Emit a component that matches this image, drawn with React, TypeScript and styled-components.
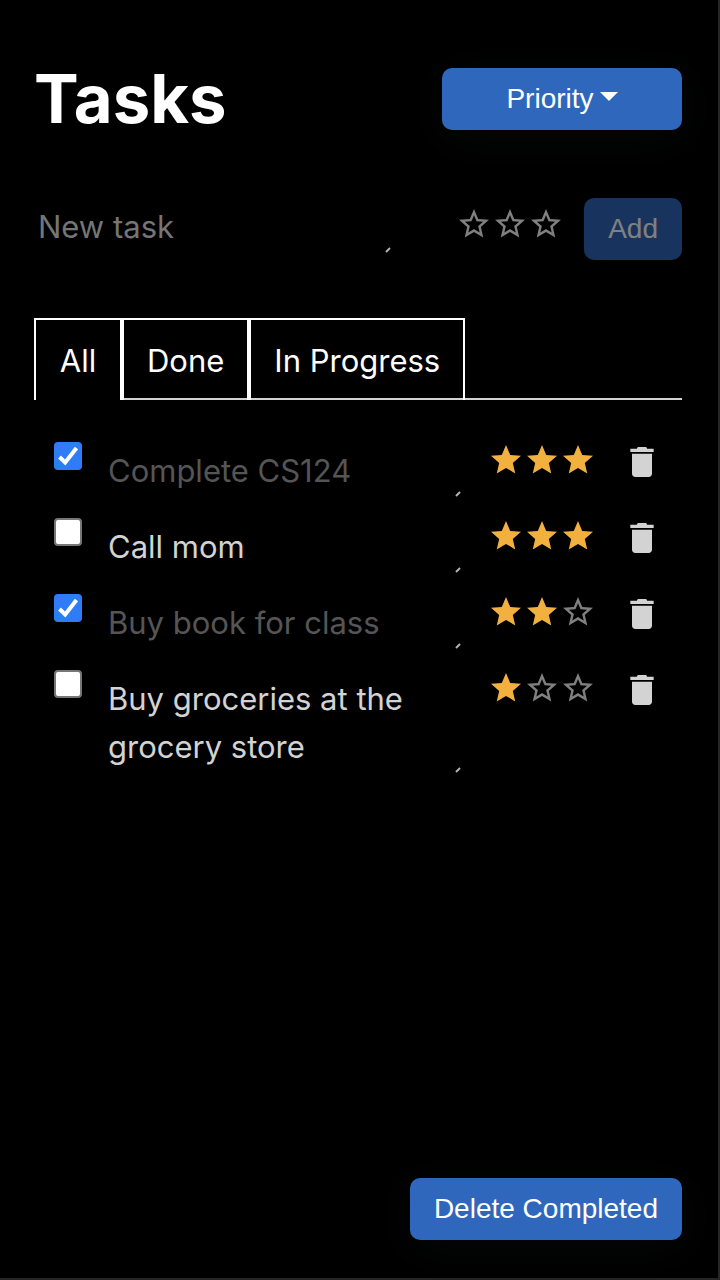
import React, { useState } from "react";
import styled, { createGlobalStyle } from "styled-components";

const GlobalStyle = createGlobalStyle`
  *, *::before, *::after { box-sizing: border-box; }
  body {
    margin: 0;
    background: #000;
    color: #fff;
    font-family: Inter, "Liberation Sans", sans-serif;
    font-size: 31px;
  }
`;

const Page = styled.main`
  display: flex;
  flex-direction: column;
  min-height: 100vh;
  padding: 54px 36px 38px 34px;
  border-right: 2px solid #262626;
  border-bottom: 2px solid #262323;
`;

const Header = styled.header`
  display: flex;
  align-items: center;
  justify-content: space-between;
  height: 90px;
`;

const Title = styled.h1`
  margin: 0;
  font-size: 67px;
  line-height: 90px;
  font-weight: 700;
`;

const Button = styled.button<{ $wide?: boolean }>`
  display: flex;
  flex: none;
  align-items: center;
  justify-content: center;
  gap: 6px;
  height: 62px;
  width: ${(p) => (p.$wide ? "240px" : "auto")};
  padding: 0 24px;
  border: 0;
  border-radius: 10px;
  background: #2f67bc;
  color: #fff;
  font: 28px "Liberation Sans", Arial, sans-serif;
  box-shadow: 0 8px 48px rgba(140, 150, 150, 0.05);
  cursor: pointer;

  &:disabled {
    opacity: 0.5;
    box-shadow: none;
    cursor: default;
  }
`;

const Caret = styled.span`
  margin-bottom: 6px;
  border: 9px solid transparent;
  border-top-color: #fff;
  border-bottom: 0;
`;

const NewTask = styled.form`
  display: flex;
  align-items: flex-start;
  margin-top: 54px;
`;

const NewRating = styled.div`
  margin: 8px 20px 0 64px;
`;

const TextWrap = styled.div`
  position: relative;
  flex: 1;
  min-width: 0;
`;

const TextArea = styled.textarea<{ $faded?: boolean }>`
  display: block;
  width: 100%;
  padding: 5px 4px 4px;
  border: 0;
  outline: 0;
  background: transparent;
  color: ${(p) => (p.$faded ? "#555" : "#d3d3d3")};
  font: inherit;
  line-height: 48px;
  resize: none;
  overflow: hidden;
  field-sizing: content;

  &::placeholder {
    color: #757575;
    opacity: 1;
  }
`;

const Grip = styled.svg`
  position: absolute;
  right: 1px;
  bottom: 2px;
  width: 6px;
  height: 6px;
`;

const Stars = styled.div`
  display: flex;
`;

const IconButton = styled.button`
  display: block;
  padding: 0;
  border: 0;
  background: none;
  cursor: pointer;

  svg { display: block; }
`;

const TabBar = styled.div`
  display: flex;
  margin-top: 58px;
`;

const Tab = styled.button<{ $active: boolean }>`
  height: 82px;
  min-width: 88px;
  padding: 0 23px;
  border: 2px solid #fff;
  border-bottom: 0;
  background: #000;
  box-shadow: ${(p) => (p.$active ? "none" : "inset 0 -2px #d3d3d3")};
  color: #fff;
  font: inherit;
  cursor: pointer;
`;

const TabRule = styled.div`
  flex: 1;
  border-bottom: 2px solid #d3d3d3;
`;

const TaskList = styled.ul`
  display: grid;
  gap: 19px;
  margin: 42px 0 0;
  padding: 0 20px;
  list-style: none;
`;

const TaskRow = styled.li`
  display: flex;
  align-items: flex-start;
`;

const CheckWrap = styled.span`
  display: grid;
  flex: none;
  margin-right: 22px;

  > * { grid-area: 1 / 1; }
  svg { pointer-events: none; }
`;

const Checkbox = styled.input`
  appearance: none;
  width: 28px;
  height: 28px;
  margin: 0;
  border: 2px solid #767676;
  border-radius: 4px;
  background: #fff;

  &:checked {
    border-color: #2e7cf6;
    background: #2e7cf6;
  }
`;

const TaskActions = styled.div`
  display: flex;
  align-items: flex-start;
  gap: 26px;
  margin-left: 26px;
`;

const Footer = styled.footer`
  display: flex;
  justify-content: flex-end;
  margin-top: auto;
`;

const FILLED =
  "M12 17.27L18.18 21l-1.64-7.03L22 9.24l-7.19-.61L12 2 9.19 8.63 2 9.24l5.46 4.73L5.82 21z";
const OUTLINE =
  "M22 9.24l-7.19-.62L12 2 9.19 8.63 2 9.24l5.46 4.73L5.82 21 12 17.27 18.18 21l-1.63-7.03L22 9.24zM12 15.4l-3.76 2.27 1-4.28-3.32-2.88 4.38-.38L12 6.1l1.71 4.04 4.38.38-3.32 2.88 1 4.28L12 15.4z";

function Rating({ value, onChange }: { value: number; onChange: (n: number) => void }) {
  return (
    <Stars role="group" aria-label="Priority">
      {[1, 2, 3].map((n) => (
        <IconButton key={n} type="button" aria-label={`Priority ${n}`} onClick={() => onChange(n)}>
          <svg width="36" height="36" viewBox="0 0 24 24" fill={n <= value ? "#f2b13f" : "#808080"}>
            <path d={n <= value ? FILLED : OUTLINE} />
          </svg>
        </IconButton>
      ))}
    </Stars>
  );
}

function EditableText({
  label,
  value,
  placeholder,
  faded,
  onChange,
}: {
  label: string;
  value: string;
  placeholder?: string;
  faded?: boolean;
  onChange: (text: string) => void;
}) {
  return (
    <TextWrap>
      <TextArea
        rows={1}
        aria-label={label}
        placeholder={placeholder}
        value={value}
        $faded={faded}
        onChange={(e) => onChange(e.target.value)}
      />
      <Grip viewBox="0 0 6 6" aria-hidden="true">
        <path d="M1 5L5 1" stroke="#b4b4b4" strokeWidth="2" />
      </Grip>
    </TextWrap>
  );
}

type Task = { id: number; text: string; done: boolean; stars: number };

const INITIAL: Task[] = [
  { id: 1, text: "Complete CS124", done: true, stars: 3 },
  { id: 2, text: "Call mom", done: false, stars: 3 },
  { id: 3, text: "Buy book for class", done: true, stars: 2 },
  { id: 4, text: "Buy groceries at the grocery store", done: false, stars: 1 },
];

const TABS = ["All", "Done", "In Progress"];

export default function App() {
  const [tasks, setTasks] = useState(INITIAL);
  const [tab, setTab] = useState("All");
  const [draft, setDraft] = useState("");
  const [draftStars, setDraftStars] = useState(0);

  const update = (id: number, change: Partial<Task>) =>
    setTasks(tasks.map((t) => (t.id === id ? { ...t, ...change } : t)));

  const visible = tasks.filter((t) => tab === "All" || t.done === (tab === "Done"));

  const add = (e: React.FormEvent) => {
    e.preventDefault();
    setTasks([...tasks, { id: Date.now(), text: draft, done: false, stars: draftStars }]);
    setDraft("");
    setDraftStars(0);
  };

  return (
    <>
      <GlobalStyle />
      <Page>
        <Header>
          <Title>Tasks</Title>
          <Button type="button" $wide aria-haspopup="menu">
            Priority
            <Caret />
          </Button>
        </Header>

        <NewTask onSubmit={add}>
          <EditableText label="New task" placeholder="New task" value={draft} onChange={setDraft} />
          <NewRating>
            <Rating value={draftStars} onChange={setDraftStars} />
          </NewRating>
          <Button type="submit" disabled={!draft}>
            Add
          </Button>
        </NewTask>

        <TabBar role="tablist">
          {TABS.map((name) => (
            <Tab
              key={name}
              type="button"
              role="tab"
              aria-selected={tab === name}
              $active={tab === name}
              onClick={() => setTab(name)}
            >
              {name}
            </Tab>
          ))}
          <TabRule />
        </TabBar>

        <TaskList>
          {visible.map((task) => (
            <TaskRow key={task.id}>
              <CheckWrap>
                <Checkbox
                  type="checkbox"
                  aria-label={`Done: ${task.text}`}
                  checked={task.done}
                  onChange={() => update(task.id, { done: !task.done })}
                />
                {task.done && (
                  <svg width="28" height="28" viewBox="0 0 28 28" fill="none" aria-hidden="true">
                    <path d="M5.5 15L11.2 20.5L22.5 6" stroke="#fff" strokeWidth="4" />
                  </svg>
                )}
              </CheckWrap>
              <EditableText
                label="Task"
                value={task.text}
                faded={task.done}
                onChange={(text) => update(task.id, { text })}
              />
              <TaskActions>
                <Rating value={task.stars} onChange={(stars) => update(task.id, { stars })} />
                <IconButton
                  type="button"
                  aria-label="Delete task"
                  onClick={() => setTasks(tasks.filter((t) => t.id !== task.id))}
                >
                  <svg width="40" height="40" viewBox="0 0 24 24" fill="#d3d3d3">
                    <path d="M6 19c0 1.1.9 2 2 2h8c1.1 0 2-.9 2-2V7H6v12zM19 4h-4c0-.6-.4-1-1-1h-4c-.6 0-1 .4-1 1H5v2h14V4z" />
                  </svg>
                </IconButton>
              </TaskActions>
            </TaskRow>
          ))}
        </TaskList>

        <Footer>
          <Button type="button" onClick={() => setTasks(tasks.filter((t) => !t.done))}>
            Delete Completed
          </Button>
        </Footer>
      </Page>
    </>
  );
}
